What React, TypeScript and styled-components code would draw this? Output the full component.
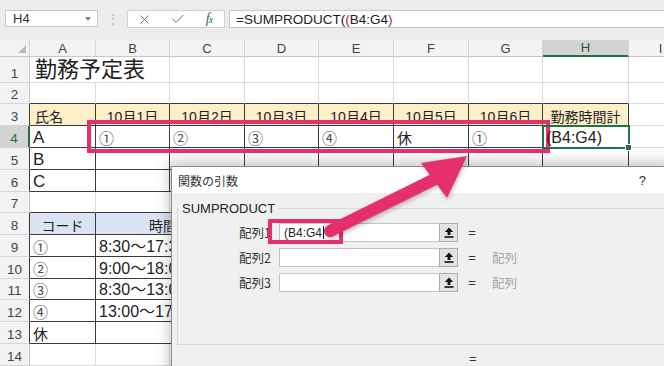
import React from 'react';
import styled, { createGlobalStyle, css } from 'styled-components';
import { X, Check } from 'lucide-react';

const GREEN = '#217346';
const GRID = '#dadada';
const DARK = '#3a3a3a';
const PINK = '#e6306d';
const YELLOW = '#fdf0c8';
const BLUE = '#dae3f3';
const JP = '"Noto Sans CJK JP", "Noto Sans", sans-serif';
const UI = '"Liberation Sans", "Noto Sans CJK JP", sans-serif';

const GlobalStyle = createGlobalStyle`
  html, body { margin: 0; padding: 0; background: #fff; overflow: hidden; }
  body { font-family: ${JP}; }
`;

const Screen = styled.div`
  position: relative;
  width: 664px;
  height: 366px;
  overflow: hidden;
  background: #fff;
`;

/* formula bar */

const FormulaBar = styled.div`
  height: 40px;
  box-sizing: border-box;
  padding: 10px 0 0 5px;
  display: flex;
  align-items: flex-start;
  background: #ececec;
`;

const NameBox = styled.div`
  width: 93px;
  height: 17px;
  box-sizing: border-box;
  display: flex;
  align-items: center;
  justify-content: space-between;
  padding: 0 6px 0 7px;
  background: #fff;
  border: 1px solid #c8c8c8;
  font: 13px ${UI};
  color: #333;
`;

const DropCaret = styled.span`
  width: 0;
  height: 0;
  border-left: 3px solid transparent;
  border-right: 3px solid transparent;
  border-top: 4px solid #808080;
`;

const Grip = styled.div`
  width: 29px;
  height: 17px;
  display: flex;
  align-items: center;
  justify-content: center;
  color: #b4b4b4;
  font: 12px ${UI};
`;

const ToolGroup = styled.div`
  width: 98px;
  height: 18px;
  box-sizing: border-box;
  display: grid;
  grid-template-columns: 32px 36px 26px;
  align-items: center;
  justify-items: center;
  background: #fff;
  border: 1px solid #d2d2d2;
  color: #6e6e6e;
`;

const FxMark = styled.span`
  font: italic 14px "Liberation Serif", serif;
  color: ${GREEN};
  letter-spacing: -1px;

  small {
    font-size: 10px;
  }
`;

const FormulaInput = styled.div`
  flex: 1;
  height: 18px;
  margin-left: 4px;
  box-sizing: border-box;
  display: flex;
  align-items: center;
  padding-left: 6px;
  background: #fff;
  border: 1px solid #c8c8c8;
  border-right: none;
  font: 13.5px ${UI};
  color: #222;
  white-space: nowrap;
`;

const Paren = styled.span`
  color: #b4252c;
`;

/* sheet */

const SheetGrid = styled.div`
  display: grid;
  grid-template-columns: 30px 66px 74px 75px 74px 75px 75px 74px 86px 64px;
  grid-template-rows: 17px 26px 21px 22px 22px 22px 22px 21px 22px 22px 22px 21px 22px 22px 22px;
  font-family: ${UI};
`;

const SelectAll = styled.div`
  position: relative;
  background: #f3f3f3;
  box-sizing: border-box;
  border-right: 1px solid #d0d0d0;
  border-bottom: 1px solid #c6c6c6;

  &::after {
    content: '';
    position: absolute;
    right: 3px;
    bottom: 3px;
    width: 0;
    height: 0;
    border-left: 8px solid transparent;
    border-bottom: 8px solid #b9b9b9;
  }
`;

const ColHead = styled.div<{ $active?: boolean }>`
  display: flex;
  align-items: center;
  justify-content: center;
  box-sizing: border-box;
  background: ${(p) => (p.$active ? '#d3d3d3' : '#f3f3f3')};
  border-right: 1px solid #d5d5d5;
  border-bottom: ${(p) => (p.$active ? `2px solid ${GREEN}` : '1px solid #c6c6c6')};
  color: ${(p) => (p.$active ? '#1d5a36' : '#444')};
  font: 13px ${UI};
`;

const RowHead = styled.div<{ $active?: boolean; $dark?: boolean }>`
  display: flex;
  align-items: flex-end;
  justify-content: center;
  padding-bottom: 1px;
  box-sizing: border-box;
  background: ${(p) => (p.$active ? '#d3d3d3' : '#f3f3f3')};
  border-bottom: 1px solid #d5d5d5;
  border-right: ${(p) =>
    p.$active ? `2px solid ${GREEN}` : `1px solid ${p.$dark ? DARK : '#c6c6c6'}`};
  color: ${(p) => (p.$active ? GREEN : '#444')};
  font: 13.5px ${UI};
`;

type CellProps = {
  $fill?: string;
  $center?: boolean;
  $size?: number;
  $dr?: boolean;
  $db?: boolean;
  $span?: number;
  $selected?: boolean;
  $muted?: boolean;
  $indent?: number;
};

const Cell = styled.div<CellProps>`
  grid-column: span ${(p) => p.$span ?? 1};
  position: relative;
  display: flex;
  align-items: flex-end;
  justify-content: ${(p) => (p.$center ? 'center' : 'flex-start')};
  padding: 0 3px 1px ${(p) => p.$indent ?? 3}px;
  box-sizing: border-box;
  min-width: 0;
  background: ${(p) => p.$fill ?? 'transparent'};
  border-right: 1px solid ${(p) => (p.$dr ? DARK : GRID)};
  border-bottom: 1px solid ${(p) => (p.$db ? DARK : GRID)};
  font-size: ${(p) => p.$size ?? 16}px;
  line-height: 1;
  color: ${(p) => (p.$muted ? '#4a4a4a' : '#222')};
  white-space: nowrap;

  ${(p) =>
    p.$selected &&
    css`
      z-index: 1;
      outline: 2px solid ${GREEN};
      outline-offset: -1px;

      &::after {
        content: '';
        position: absolute;
        right: -4px;
        bottom: -4px;
        width: 5px;
        height: 5px;
        background: ${GREEN};
        border: 1px solid #fff;
      }
    `}
`;

/* dialog */

const Dialog = styled.div`
  position: absolute;
  left: 171px;
  top: 166px;
  width: 500px;
  height: 220px;
  box-sizing: border-box;
  display: flex;
  flex-direction: column;
  background: #f0f0f0;
  border: 1px solid #8a8a8a;
  box-shadow: 0 -2px 12px 3px rgba(0, 0, 0, 0.2);
  font-family: ${JP};
`;

const DialogTitle = styled.div`
  height: 26px;
  flex: none;
  display: flex;
  align-items: center;
  justify-content: space-between;
  padding: 0 24px 0 6px;
  background: #fff;
  font-size: 12px;
  color: #333;
`;

const HelpMark = styled.span`
  font: 13px ${UI};
  color: #333;
`;

const ArgGroup = styled.fieldset`
  margin: 8px 0 0 5px;
  padding: 7px 0 0 0;
  height: 144px;
  flex: none;
  box-sizing: border-box;
  border: 1px solid #d9d9d9;
  border-right: none;
  display: grid;
  grid-template-columns: 101px 160px 19px 28px auto;
  grid-auto-rows: 19px;
  row-gap: 6px;
  column-gap: 0;
  align-content: start;
  align-items: center;
`;

const GroupLegend = styled.legend`
  margin-left: 1px;
  padding: 0 3px;
  font: 13px ${UI};
  color: #222;
`;

const ArgLabel = styled.span`
  justify-self: end;
  margin-right: 8px;
  font-size: 12.5px;
  color: #333;
  grid-column: 1;
`;

const ArgInput = styled.div`
  height: 19px;
  box-sizing: border-box;
  display: flex;
  align-items: center;
  padding-left: 4px;
  background: #fff;
  border: 1px solid #c4c4c4;
  border-right: none;
  font: 12px ${UI};
  color: #222;
`;

const Caret = styled.span`
  display: inline-block;
  width: 1px;
  height: 13px;
  margin-left: 1px;
  background: #111;
`;

const RefButton = styled.div`
  height: 19px;
  box-sizing: border-box;
  display: flex;
  align-items: center;
  justify-content: center;
  background: #e3e3e3;
  border: 1px solid #adadad;
`;

const Equals = styled.span`
  justify-self: center;
  font: 13px ${UI};
  color: #333;
`;

const ArgValue = styled.span`
  padding-left: 6px;
  font-size: 12.5px;
  color: #a6a6a6;
`;

const ResultLine = styled.div`
  padding: 7px 0 0 297px;
  font: 13px/13px ${UI};
  color: #333;
`;

/* annotations laid over the screenshot */

const Frame = styled.div<{ $x: number; $y: number; $w: number; $h: number }>`
  position: absolute;
  left: ${(p) => p.$x}px;
  top: ${(p) => p.$y}px;
  width: ${(p) => p.$w}px;
  height: ${(p) => p.$h}px;
  box-sizing: border-box;
  border: 4px solid ${PINK};
  pointer-events: none;
`;

const ArrowLayer = styled.svg`
  position: absolute;
  left: 0;
  top: 0;
  pointer-events: none;
  filter: drop-shadow(1px 2px 2px rgba(0, 0, 0, 0.25));
`;

type Spec = {
  text?: string;
  span?: number;
  fill?: string;
  center?: boolean;
  size?: number;
  box?: boolean;
  db?: boolean;
  selected?: boolean;
  muted?: boolean;
  indent?: number;
};

const COLS = ['A', 'B', 'C', 'D', 'E', 'F', 'G', 'H', 'I'];

const blank = (n: number, spec: Spec = {}): Spec[] => Array.from({ length: n }, () => ({ ...spec }));

const head = (text: string): Spec => ({ text, fill: YELLOW, center: true, size: 14, box: true });

const circled = (text: string): Spec => ({ text, size: 15, box: true, muted: text !== '休' });

const times = ['8:30～17:30', '9:00～18:00', '8:30～13:00', '13:00～17:00'];
const codes = ['①', '②', '③', '④'];

const rows: Spec[][] = [
  [{ text: '勤務予定表', span: 2, size: 22, indent: 5 }, ...blank(7)],
  [...blank(8, { db: true }), {}],
  [
    { text: '氏名', fill: YELLOW, size: 14, box: true, indent: 5 },
    head('10月1日'),
    head('10月2日'),
    head('10月3日'),
    head('10月4日'),
    head('10月5日'),
    head('10月6日'),
    head('勤務時間計'),
    {},
  ],
  [
    { text: 'A', size: 17, box: true },
    ...['①', '②', '③', '④', '休', '①'].map(circled),
    { text: '(B4:G4)', box: true, selected: true },
    {},
  ],
  [{ text: 'B', size: 17, box: true }, ...blank(7, { box: true }), {}],
  [{ text: 'C', size: 17, box: true }, ...blank(7, { box: true }), {}],
  [...blank(3, { db: true }), ...blank(6)],
  [
    { text: 'コード', fill: BLUE, center: true, size: 14, box: true },
    { text: '時間帯', span: 2, fill: BLUE, center: true, size: 14, box: true },
    ...blank(6),
  ],
  ...times.map((t, i) => [circled(codes[i]), { text: t, span: 2, box: true }, ...blank(6)]),
  [circled('休'), { span: 2, box: true }, ...blank(6)],
  blank(9),
];

const boxedRows = [3, 4, 5, 6, 8, 9, 10, 11, 12, 13];

const UpArrowIcon = () => (
  <svg width="10" height="11" viewBox="0 0 10 11">
    <path d="M5 0.5 L9.2 5 H6.4 V8 H3.6 V5 H0.8 Z" fill="#111" />
    <rect x="0.5" y="9.2" width="9" height="1.6" fill="#111" />
  </svg>
);

const args = [
  { label: '配列1', value: '(B4:G4', active: true },
  { label: '配列2', value: '' },
  { label: '配列3', value: '' },
];

export default function App() {
  return (
    <Screen>
      <GlobalStyle />
      <FormulaBar>
        <NameBox>
          H4
          <DropCaret />
        </NameBox>
        <Grip>⋮</Grip>
        <ToolGroup>
          <X size={15} strokeWidth={1.5} />
          <Check size={16} strokeWidth={1.5} />
          <FxMark>
            f<small>x</small>
          </FxMark>
        </ToolGroup>
        <FormulaInput>
          =SUMPRODUCT(<Paren>(</Paren>B4:G4<Paren>)</Paren>
        </FormulaInput>
      </FormulaBar>

      <SheetGrid>
        <SelectAll />
        {COLS.map((c) => (
          <ColHead key={c} $active={c === 'H'}>
            {c}
          </ColHead>
        ))}
        {rows.map((row, r) => (
          <React.Fragment key={r}>
            <RowHead $active={r + 1 === 4} $dark={boxedRows.includes(r + 1)}>
              {r + 1}
            </RowHead>
            {row.map((cell, c) => (
              <Cell
                key={c}
                $span={cell.span}
                $fill={cell.fill}
                $center={cell.center}
                $size={cell.size}
                $dr={cell.box}
                $db={cell.box || cell.db}
                $selected={cell.selected}
                $muted={cell.muted}
                $indent={cell.indent}
              >
                {cell.text}
              </Cell>
            ))}
          </React.Fragment>
        ))}
      </SheetGrid>

      <Frame $x={87} $y={120} $w={463} $h={33} />

      <Dialog>
        <DialogTitle>
          関数の引数
          <HelpMark>?</HelpMark>
        </DialogTitle>
        <ArgGroup>
          <GroupLegend>SUMPRODUCT</GroupLegend>
          {args.map((a) => (
            <React.Fragment key={a.label}>
              <ArgLabel>{a.label}</ArgLabel>
              <ArgInput>
                {a.value}
                {a.active && <Caret />}
              </ArgInput>
              <RefButton>
                <UpArrowIcon />
              </RefButton>
              <Equals>=</Equals>
              <ArgValue>{a.active ? '' : '配列'}</ArgValue>
            </React.Fragment>
          ))}
        </ArgGroup>
        <ResultLine>=</ResultLine>
      </Dialog>

      <Frame $x={268} $y={219} $w={75} $h={25} />

      <ArrowLayer width="664" height="366" viewBox="0 0 664 366">
        <line x1="330" y1="231" x2="437" y2="178" stroke={PINK} strokeWidth="12" strokeLinecap="round" />
        <polygon points="467,156 421,163 447,198" fill={PINK} />
      </ArrowLayer>
    </Screen>
  );
}
